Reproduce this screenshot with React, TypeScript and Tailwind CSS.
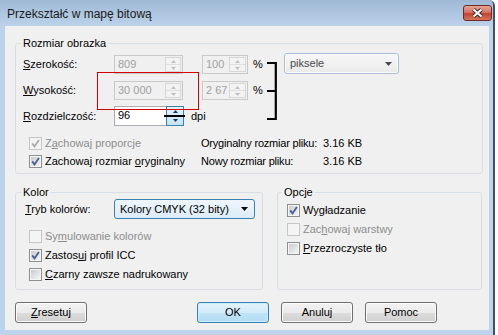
import React from "react";

const FONT = "font-['Liberation_Sans',Arial,sans-serif]";

const plainBtn =
  "flex h-[21px] w-[72px] items-center justify-center rounded-[3px] border border-[#707070] bg-[linear-gradient(#f2f2f2,#ebebeb_50%,#dddddd_50%,#cfcfcf)] shadow-[inset_0_0_0_1px_#fbfbfb]";

function Arrow({ up, color }: { up?: boolean; color: string }) {
  return (
    <svg width="5" height="3" viewBox="0 0 5 3">
      <path d={up ? "M0 3L2.5 0L5 3Z" : "M0 0L2.5 3L5 0Z"} fill={color} />
    </svg>
  );
}

function DownArrow({ color }: { color: string }) {
  return (
    <svg width="7" height="4" viewBox="0 0 7 4">
      <path d="M0 0L3.5 4L7 0Z" fill={color} />
    </svg>
  );
}

// spin box used for the size / percent fields
function SpinBox({ value, w, spinW, active = false }: { value: string; w: string; spinW: string; active?: boolean }) {
  return (
    <div
      className={`flex h-full ${w} border ${
        active ? "border-[#abadb3] bg-white" : "border-[#c9c9c9] bg-[#f0f0f0]"
      }`}
    >
      <span className={`flex-1 pl-[3px] pt-[2px] ${active ? "text-black" : "text-[#a0a0a0]"}`}>{value}</span>
      {active ? (
        <div className={`-my-px -mr-px flex ${spinW} flex-col border border-[#3c7fb1] bg-[linear-gradient(#e5f3fb,#c4e3f6)]`}>
          <div className="flex flex-1 items-center justify-center border-b border-[#7eb4ea]">
            <Arrow up color="#1e395b" />
          </div>
          <div className="flex flex-1 items-center justify-center">
            <Arrow color="#1e395b" />
          </div>
        </div>
      ) : (
        <div className={`my-px mr-px flex ${spinW} flex-col border border-[#d7d7d7] bg-[#f3f3f3]`}>
          <div className="flex flex-1 items-center justify-center border-b border-[#dedede]">
            <Arrow up color="#c0c0c0" />
          </div>
          <div className="flex flex-1 items-center justify-center">
            <Arrow color="#c0c0c0" />
          </div>
        </div>
      )}
    </div>
  );
}

function CheckBox({ checked = false, disabled = false }: { checked?: boolean; disabled?: boolean }) {
  return (
    <span
      className={`flex h-[13px] w-[13px] shrink-0 items-center justify-center border p-px ${
        disabled ? "border-[#c5c5c5] bg-[#f4f4f4]" : "border-[#8e8f8f] bg-[#f6f6f6]"
      }`}
    >
      <span
        className={`relative flex h-full w-full items-center justify-center ${
          disabled ? "bg-[#f4f4f4]" : "bg-[linear-gradient(135deg,#c9ccd1,#f4f4f4)]"
        }`}
      >
        {checked && (
          <svg width="9" height="9" viewBox="0 0 9 9" className="absolute">
            <path
              d="M1.2 4.4L3.5 7.4L7.9 1"
              fill="none"
              stroke={disabled ? "#acacac" : "#4a5f97"}
              strokeWidth="1.8"
            />
          </svg>
        )}
      </span>
    </span>
  );
}

function Opt({
  checked,
  disabled,
  children,
}: {
  checked?: boolean;
  disabled?: boolean;
  children: React.ReactNode;
}) {
  return (
    <div className="flex h-full items-center gap-[3px]">
      <CheckBox checked={checked} disabled={disabled} />
      <span className={disabled ? "text-[#8d8d8d]" : ""}>{children}</span>
    </div>
  );
}

export default function App() {
  return (
    <div
      className={`${FONT} relative h-[335px] w-[495px] overflow-hidden rounded-tr-[6px] border-r-2 border-[#3d5066] bg-[#bdd3eb] text-[11px] leading-[13px] text-black`}
    >
      {/* Title bar */}
      <div className="flex h-[26px] items-start justify-between bg-[linear-gradient(#9fb9d5,#bcd2ea)] pl-[7px] pr-[1px]">
        <span className="mt-[7px] text-[12px] leading-[14px] text-[#1a1a1a]">Przekształć w mapę bitową</span>
        <button className="mt-[5px] flex h-[16px] w-[29px] items-center justify-center rounded-[3px] border border-[#6f2a22] bg-[linear-gradient(#e8a493,#d47665_45%,#c5432f_55%,#d5765c)]">
          <svg width="13" height="10" viewBox="0 0 13 10">
            <path d="M2.5 1.5L10.5 8.5M10.5 1.5L2.5 8.5" stroke="#4a2a28" strokeWidth="4" />
            <path d="M2.5 1.5L10.5 8.5M10.5 1.5L2.5 8.5" stroke="#ffffff" strokeWidth="2" />
          </svg>
        </button>
      </div>

      {/* Client area */}
      <div className="ml-[5px] flex h-[304px] w-[484px] flex-col bg-[#f0f0f0]">
        {/* Rozmiar obrazka */}
        <fieldset className="ml-[10px] mt-[11px] w-[468px] rounded-[3px] border border-[#d5dfe5] pb-[3px]">
          <legend className="ml-[5px] px-[2px] leading-[13px]">Rozmiar obrazka</legend>
          <div className="flex items-start pl-[7px] pt-[5px]">
            <div className="flex flex-col">
              <div className="flex h-[19px] items-center">
                <span className="w-[91px]">
                  <u>S</u>zerokość:
                </span>
                <SpinBox value="809" w="w-[69px]" spinW="w-[16px]" />
                <div className="ml-[19px] h-full">
                  <SpinBox value="100" w="w-[46px]" spinW="w-[17px]" />
                </div>
                <span className="ml-[5px] w-[9px]">%</span>
              </div>
              <div className="mt-[7px] flex h-[19px] items-center">
                <span className="w-[91px]">
                  <u>W</u>ysokość:
                </span>
                <SpinBox value="30 000" w="w-[69px]" spinW="w-[16px]" />
                <div className="ml-[19px] h-full">
                  <SpinBox value="2 67" w="w-[46px]" spinW="w-[17px]" />
                </div>
                <span className="ml-[5px] w-[9px]">%</span>
              </div>
              <div className="mt-[6px] flex h-[20px] items-center">
                <span className="w-[91px]">
                  <u>R</u>ozdzielczość:
                </span>
                <SpinBox value="96" w="w-[70px]" spinW="w-[18px]" active />
                <span className="ml-[7px]">dpi</span>
              </div>
            </div>
            <svg width="10" height="58" viewBox="0 0 10 58" className="ml-[5px] mt-[7px]">
              <path d="M0 1H9M0 29H9M0 57H9M8.8 0V58" stroke="#000" strokeWidth="2.2" fill="none" />
            </svg>
            <div className="-mt-[2px] ml-[7px] flex h-[21px] w-[115px] items-center justify-between rounded-[3px] border border-[#a9bfd9] bg-[linear-gradient(#f7f7f7,#eaeaea)] pl-[5px] pr-[6px] shadow-[inset_0_0_0_1px_#fbfbfb]">
              <span className="text-[#4a4a4a]">piksele</span>
              <DownArrow color="#4a4a4a" />
            </div>
          </div>
          <div className="mt-[8px] grid grid-cols-[172px_122px_1fr] pl-[13px]">
            <div className="h-[18px]">
              <Opt checked disabled>
                Z<u>a</u>chowaj proporcje
              </Opt>
            </div>
            <div className="flex h-[18px] items-center tracking-[-0.2px]">Oryginalny rozmiar pliku:</div>
            <div className="flex h-[18px] items-center">3.16 KB</div>
            <div className="h-[18px]">
              <Opt checked>
                Zachowaj rozmiar <u>o</u>ryginalny
              </Opt>
            </div>
            <div className="flex h-[18px] items-center tracking-[-0.2px]">Nowy rozmiar pliku:</div>
            <div className="flex h-[18px] items-center">3.16 KB</div>
          </div>
        </fieldset>

        <div className="mt-[12px] flex">
          {/* Kolor */}
          <fieldset className="ml-[10px] h-[104px] w-[248px] rounded-[3px] border border-[#d5dfe5]">
            <legend className="ml-[5px] px-[2px] leading-[13px]">Kolor</legend>
            <div className="flex items-center pl-[9px]">
              <span className="w-[89px]">
                <u>T</u>ryb kolorów:
              </span>
              <div className="flex h-[20px] w-[141px] items-center justify-between rounded-[3px] border border-[#3c7fb1] bg-[linear-gradient(#eef6fc,#dcecf9)] pl-[5px] pr-[6px]">
                <span>Kolory CMYK (32 bity)</span>
                <DownArrow color="#000" />
              </div>
            </div>
            <div className="mt-[8px] flex flex-col pl-[13px]">
              <div className="h-[19px]">
                <Opt disabled>
                  Sy<u>m</u>ulowanie kolorów
                </Opt>
              </div>
              <div className="h-[19px]">
                <Opt checked>
                  Zastos<u>u</u>j profil ICC
                </Opt>
              </div>
              <div className="h-[19px]">
                <Opt>
                  <u>C</u>zarny zawsze nadrukowany
                </Opt>
              </div>
            </div>
          </fieldset>

          {/* Opcje */}
          <fieldset className="ml-[14px] h-[104px] w-[205px] rounded-[3px] border border-[#d5dfe5]">
            <legend className="ml-[4px] px-[2px] leading-[13px]">Opcje</legend>
            <div className="flex flex-col pl-[9px] pt-[2px]">
              <div className="h-[19px]">
                <Opt checked>
                  Wy<u>g</u>ładzanie
                </Opt>
              </div>
              <div className="h-[19px]">
                <Opt disabled>
                  Zac<u>h</u>owaj warstwy
                </Opt>
              </div>
              <div className="h-[19px]">
                <Opt>
                  <u>P</u>rzezroczyste tło
                </Opt>
              </div>
            </div>
          </fieldset>
        </div>

        {/* Buttons */}
        <div className="mt-[12px] flex">
          <button className={`ml-[10px] ${plainBtn}`}>
            <span>
              <u>Z</u>resetuj
            </span>
          </button>
          <button className="ml-[110px] flex h-[21px] w-[72px] items-center justify-center rounded-[3px] border border-[#3c7fb1] bg-[linear-gradient(#e5f4fc,#d2ebf9_50%,#c0e3f6_50%,#b4ddf4)] shadow-[inset_0_0_0_1px_#c9eefc]">
            OK
          </button>
          <button className={`ml-[12px] ${plainBtn}`}>Anuluj</button>
          <button className={`ml-[12px] ${plainBtn}`}>Pomoc</button>
        </div>
      </div>

      {/* annotations drawn over the dialog */}
      <div className="absolute left-[97px] top-[72px] h-[38px] w-[102px] border border-[#d40000]" />
      <div className="absolute left-[164px] top-[115px] h-[2px] w-[21px] bg-black" />
    </div>
  );
}
